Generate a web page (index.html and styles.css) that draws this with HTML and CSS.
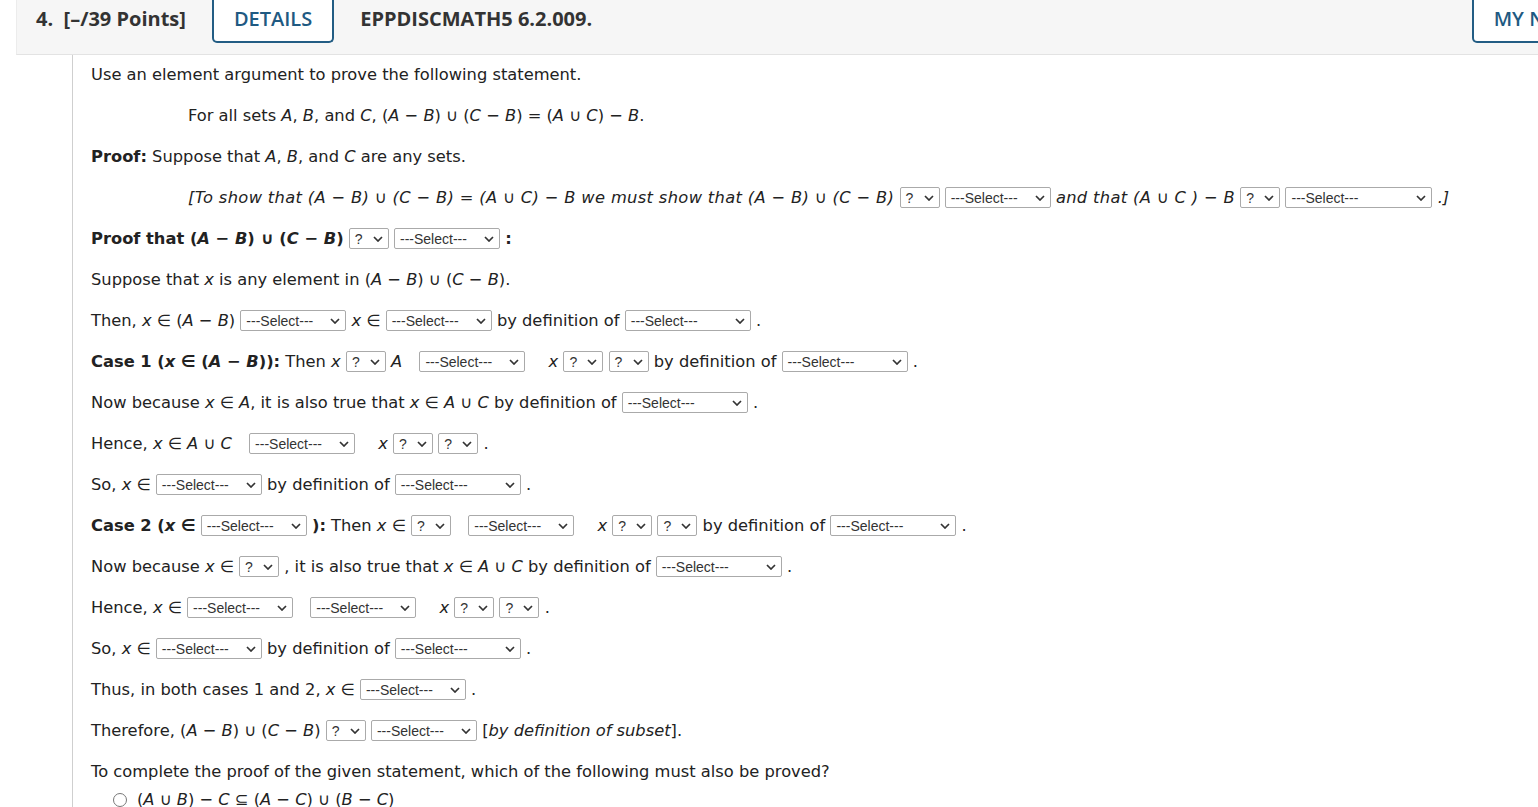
FILE: index.html
```html
<!DOCTYPE html>
<html>
<head>
<meta charset="utf-8">
<link rel="stylesheet" href="styles.css">
</head>
<body>
<div class="qhead">
  <span class="qnum">4.&nbsp; [–/39 Points]</span>
  <span class="hbtn">DETAILS</span>
  <span class="qcode">EPPDISCMATH5 6.2.009.</span>
  <span class="hbtn notes">MY NOTES</span>
</div>
<div class="qbody">
  <div class="row">Use an element argument to prove the following statement.</div>
  <div class="row ind">For all sets <i>A</i>, <i>B</i>, and <i>C</i>, (<i>A</i> − <i>B</i>) ∪ (<i>C</i> − <i>B</i>) = (<i>A</i> ∪ <i>C</i>) − <i>B</i>.</div>
  <div class="row"><b>Proof:</b> Suppose that <i>A</i>, <i>B</i>, and <i>C</i> are any sets.</div>
  <div class="row ind"><i class="wide">[To show that (A − B) ∪ (C − B) = (A ∪ C) − B we must show that (A − B) ∪ (C − B)</i> <span class="sel q">?<svg width="10" height="6" viewBox="0 0 10 6"><path d="M1 1l4 4 4-4"/></svg></span> <span class="sel">---Select---<svg width="10" height="6" viewBox="0 0 10 6"><path d="M1 1l4 4 4-4"/></svg></span> <i class="wide">and that (A ∪ C ) − B</i> <span class="sel q">?<svg width="10" height="6" viewBox="0 0 10 6"><path d="M1 1l4 4 4-4"/></svg></span> <span class="sel xw">---Select---<svg width="10" height="6" viewBox="0 0 10 6"><path d="M1 1l4 4 4-4"/></svg></span> <i>.]</i></div>
  <div class="row"><b>Proof that (<i>A</i> − <i>B</i>) ∪ (<i>C</i> − <i>B</i>)</b> <span class="sel q">?<svg width="10" height="6" viewBox="0 0 10 6"><path d="M1 1l4 4 4-4"/></svg></span> <span class="sel">---Select---<svg width="10" height="6" viewBox="0 0 10 6"><path d="M1 1l4 4 4-4"/></svg></span> <b>:</b></div>
  <div class="row">Suppose that <i>x</i> is any element in (<i>A</i> − <i>B</i>) ∪ (<i>C</i> − <i>B</i>).</div>
  <div class="row">Then, <i>x</i> ∈ (<i>A</i> − <i>B</i>) <span class="sel">---Select---<svg width="10" height="6" viewBox="0 0 10 6"><path d="M1 1l4 4 4-4"/></svg></span> <i>x</i> ∈ <span class="sel">---Select---<svg width="10" height="6" viewBox="0 0 10 6"><path d="M1 1l4 4 4-4"/></svg></span> by definition of <span class="sel w">---Select---<svg width="10" height="6" viewBox="0 0 10 6"><path d="M1 1l4 4 4-4"/></svg></span> .</div>
  <div class="row"><b>Case 1 (<i>x</i> ∈ (<i>A</i> − <i>B</i>)):</b> Then <i>x</i> <span class="sel q">?<svg width="10" height="6" viewBox="0 0 10 6"><path d="M1 1l4 4 4-4"/></svg></span> <i>A</i> <span class="sel gap">---Select---<svg width="10" height="6" viewBox="0 0 10 6"><path d="M1 1l4 4 4-4"/></svg></span> <i>x</i> <span class="sel q">?<svg width="10" height="6" viewBox="0 0 10 6"><path d="M1 1l4 4 4-4"/></svg></span> <span class="sel q">?<svg width="10" height="6" viewBox="0 0 10 6"><path d="M1 1l4 4 4-4"/></svg></span> by definition of <span class="sel w">---Select---<svg width="10" height="6" viewBox="0 0 10 6"><path d="M1 1l4 4 4-4"/></svg></span> .</div>
  <div class="row">Now because <i>x</i> ∈ <i>A</i>, it is also true that <i>x</i> ∈ <i>A</i> ∪ <i>C</i> by definition of <span class="sel w">---Select---<svg width="10" height="6" viewBox="0 0 10 6"><path d="M1 1l4 4 4-4"/></svg></span> .</div>
  <div class="row">Hence, <i>x</i> ∈ <i>A</i> ∪ <i>C</i> <span class="sel gap">---Select---<svg width="10" height="6" viewBox="0 0 10 6"><path d="M1 1l4 4 4-4"/></svg></span> <i>x</i> <span class="sel q">?<svg width="10" height="6" viewBox="0 0 10 6"><path d="M1 1l4 4 4-4"/></svg></span> <span class="sel q">?<svg width="10" height="6" viewBox="0 0 10 6"><path d="M1 1l4 4 4-4"/></svg></span> .</div>
  <div class="row">So, <i>x</i> ∈ <span class="sel">---Select---<svg width="10" height="6" viewBox="0 0 10 6"><path d="M1 1l4 4 4-4"/></svg></span> by definition of <span class="sel w">---Select---<svg width="10" height="6" viewBox="0 0 10 6"><path d="M1 1l4 4 4-4"/></svg></span> .</div>
  <div class="row"><b>Case 2 (<i>x</i> ∈</b> <span class="sel">---Select---<svg width="10" height="6" viewBox="0 0 10 6"><path d="M1 1l4 4 4-4"/></svg></span> <b>):</b> Then <i>x</i> ∈ <span class="sel q">?<svg width="10" height="6" viewBox="0 0 10 6"><path d="M1 1l4 4 4-4"/></svg></span> <span class="sel gap">---Select---<svg width="10" height="6" viewBox="0 0 10 6"><path d="M1 1l4 4 4-4"/></svg></span> <i>x</i> <span class="sel q">?<svg width="10" height="6" viewBox="0 0 10 6"><path d="M1 1l4 4 4-4"/></svg></span> <span class="sel q">?<svg width="10" height="6" viewBox="0 0 10 6"><path d="M1 1l4 4 4-4"/></svg></span> by definition of <span class="sel w">---Select---<svg width="10" height="6" viewBox="0 0 10 6"><path d="M1 1l4 4 4-4"/></svg></span> .</div>
  <div class="row">Now because <i>x</i> ∈ <span class="sel q">?<svg width="10" height="6" viewBox="0 0 10 6"><path d="M1 1l4 4 4-4"/></svg></span> , it is also true that <i>x</i> ∈ <i>A</i> ∪ <i>C</i> by definition of <span class="sel w">---Select---<svg width="10" height="6" viewBox="0 0 10 6"><path d="M1 1l4 4 4-4"/></svg></span> .</div>
  <div class="row">Hence, <i>x</i> ∈ <span class="sel">---Select---<svg width="10" height="6" viewBox="0 0 10 6"><path d="M1 1l4 4 4-4"/></svg></span> <span class="sel gap">---Select---<svg width="10" height="6" viewBox="0 0 10 6"><path d="M1 1l4 4 4-4"/></svg></span> <i>x</i> <span class="sel q">?<svg width="10" height="6" viewBox="0 0 10 6"><path d="M1 1l4 4 4-4"/></svg></span> <span class="sel q">?<svg width="10" height="6" viewBox="0 0 10 6"><path d="M1 1l4 4 4-4"/></svg></span> .</div>
  <div class="row">So, <i>x</i> ∈ <span class="sel">---Select---<svg width="10" height="6" viewBox="0 0 10 6"><path d="M1 1l4 4 4-4"/></svg></span> by definition of <span class="sel w">---Select---<svg width="10" height="6" viewBox="0 0 10 6"><path d="M1 1l4 4 4-4"/></svg></span> .</div>
  <div class="row">Thus, in both cases 1 and 2, <i>x</i> ∈ <span class="sel">---Select---<svg width="10" height="6" viewBox="0 0 10 6"><path d="M1 1l4 4 4-4"/></svg></span> .</div>
  <div class="row">Therefore, (<i>A</i> − <i>B</i>) ∪ (<i>C</i> − <i>B</i>) <span class="sel q">?<svg width="10" height="6" viewBox="0 0 10 6"><path d="M1 1l4 4 4-4"/></svg></span> <span class="sel">---Select---<svg width="10" height="6" viewBox="0 0 10 6"><path d="M1 1l4 4 4-4"/></svg></span> [<i>by definition of subset</i>].</div>
  <div class="row last">To complete the proof of the given statement, which of the following must also be proved?</div>
  <div class="opt"><span class="radio"></span><span class="otext">(<i>A</i> ∪ <i>B</i>) − <i>C</i> ⊆ (<i>A</i> − <i>C</i>) ∪ (<i>B</i> − <i>C</i>)</span></div>
</div>
</body>
</html>
```
FILE: styles.css
```css
html, body {
  margin: 0;
  padding: 0;
  background: #fff;
  overflow: hidden;
}
body {
  width: 1538px;
  height: 807px;
  font-family: "DejaVu Sans", Verdana, sans-serif;
  color: #222;
}
.qhead {
  margin-left: 16px;
  height: 54px;
  border-bottom: 1px solid #e3e3e3;
  border-left: 1px solid #ececec;
  background: #f6f6f6;
  display: flex;
  align-items: flex-start;
  padding-left: 19px;
  font-family: "Open Sans", sans-serif;
  font-size: 20px;
  color: #333;
}
.qnum, .qcode {
  font-weight: 700;
  line-height: 38px;
}
.qnum { margin-right: 26px; }
.qcode { margin-left: 26px; }
.hbtn {
  box-sizing: border-box;
  height: 44px;
  margin-top: -1px;
  padding: 0 20px;
  border: 2px solid #235d84;
  border-top: none;
  border-radius: 0 0 5px 5px;
  color: #1f5a82;
  font-weight: 600;
  text-align: center;
  line-height: 40px;
  background: #fff;
  white-space: nowrap;
}
.notes {
  margin-left: auto;
  margin-right: -78px;
}
.qbody {
  margin-left: 72px;
  border-left: 1px solid #cfcfcf;
  padding: 8px 0 0 18px;
  font-size: 16.3px;
}
.row {
  line-height: 24px;
  margin-bottom: 17px;
  white-space: nowrap;
}
.row.last { margin-bottom: 6px; }
.ind { padding-left: 97px; }
.wide { letter-spacing: 0.35px; }
.sel {
  display: inline-flex;
  align-items: center;
  justify-content: space-between;
  box-sizing: border-box;
  width: 106px;
  height: 21px;
  padding: 0 5px 0 5px;
  border: 1px solid #aaa;
  border-radius: 2px;
  background: #fff;
  font: normal 400 14px "Liberation Sans", Arial, sans-serif;
  letter-spacing: 0;
  color: #333;
  vertical-align: middle;
  position: relative;
  top: -1px;
}
.sel svg path {
  fill: none;
  stroke: #333;
  stroke-width: 1.7;
}
.sel.q { width: 40px; }
.sel.w { width: 126px; }
.sel.xw { width: 147px; }
.sel.gap { margin: 0 18px 0 12px; }
.opt {
  padding-left: 22px;
  line-height: 20px;
  display: flex;
  align-items: center;
}
.radio {
  flex: none;
  width: 12px;
  height: 12px;
  border: 1px solid #777;
  border-radius: 50%;
  margin-right: 10px;
}
.otext { white-space: nowrap; }
```
